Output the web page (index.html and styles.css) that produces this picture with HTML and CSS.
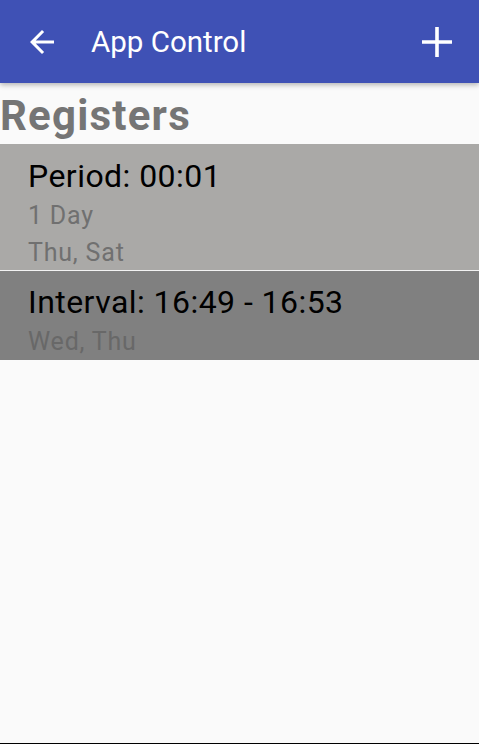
FILE: index.html
```html
<!DOCTYPE html>
<html>
<head>
<meta charset="utf-8">
<link rel="stylesheet" href="styles.css">
</head>
<body>
<div class="screen">
  <header class="appbar">
    <svg class="icon-back" width="36" height="36" viewBox="0 0 24 24"><path fill="#fff" d="M20 11H7.83l5.59-5.59L12 4l-8 8 8 8 1.41-1.41L7.83 13H20v-2z"/></svg>
    <div class="title">App Control</div>
    <svg class="icon-add" width="30" height="30" viewBox="0 0 30 30"><path fill="#fff" d="M13.2 0h3.6v13.2H30v3.6H16.8V30h-3.6V16.8H0v-3.6h13.2z"/></svg>
  </header>
  <h1 class="heading">Registers</h1>
  <div class="list">
    <div class="item item-light">
      <div class="item-title">Period: 00:01</div>
      <div class="item-sub">1 Day</div>
      <div class="item-sub">Thu, Sat</div>
    </div>
    <div class="item item-dark">
      <div class="item-title">Interval: 16:49 - 16:53</div>
      <div class="item-sub">Wed, Thu</div>
    </div>
  </div>
  <div class="filler"></div>
  <div class="bottom-line"></div>
</div>
</body>
</html>
```
FILE: styles.css
```css
html, body {
  margin: 0;
  padding: 0;
  background: #fafafa;
}
.screen {
  width: 479px;
  height: 744px;
  display: flex;
  flex-direction: column;
  font-family: Roboto, "Liberation Sans", sans-serif;
  overflow: hidden;
}
.appbar {
  height: 83px;
  flex: none;
  background: #3f51b5;
  display: flex;
  align-items: center;
  padding: 0 27px 0 24px;
  box-shadow: 0 2px 5px rgba(0,0,0,0.28);
  position: relative;
  z-index: 1;
  box-sizing: border-box;
}
.icon-back {
  flex: none;
}
.title {
  color: #fff;
  font-size: 29.5px;
  margin-left: 31px;
  flex: 1;
}
.icon-add {
  flex: none;
}
.heading {
  margin: 0;
  padding: 4px 0 0 0;
  line-height: 57px;
  font-size: 42px;
  font-weight: 700;
  letter-spacing: 1.2px;
  color: #757575;
  flex: none;
}
.list {
  flex: none;
  display: flex;
  flex-direction: column;
}
.item {
  padding: 11px 28px 0 28px;
  box-sizing: border-box;
}
.item-light {
  background: #aaa9a7;
  height: 127px;
  border-bottom: 1px solid #f2f2f2;
}
.item-dark {
  background: #808080;
  height: 89px;
  padding-top: 10px;
}
.item-title {
  color: #000;
  font-size: 32px;
  letter-spacing: 0.45px;
  line-height: 42px;
}
.item-sub {
  font-size: 25px;
  letter-spacing: 0.8px;
  line-height: 37px;
}
.item-light .item-sub {
  color: #707070;
}
.item-dark .item-sub {
  color: #686868;
}
.filler {
  flex: 1;
}
.bottom-line {
  height: 1px;
  background: #000;
  flex: none;
}
```
